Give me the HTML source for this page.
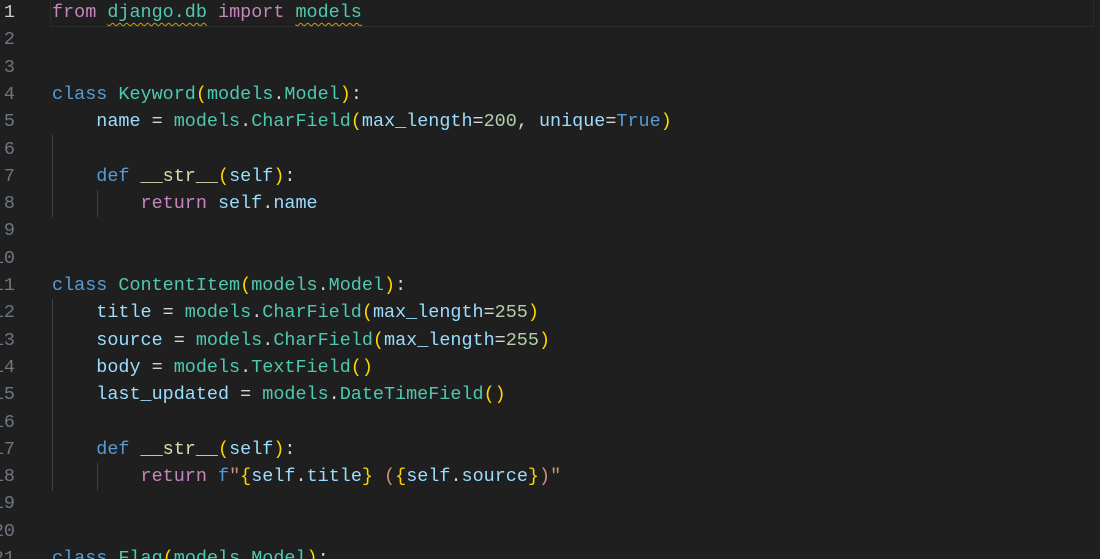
<!DOCTYPE html>
<html><head><style>
html,body{margin:0;padding:0;background:#1f1f1f;width:1100px;height:559px;overflow:hidden}
.ed{position:relative;font-family:"Liberation Mono",monospace;font-size:18.45px;}
.ln{position:absolute;left:-26px;width:41px;text-align:right;color:#6e7681;height:27.3px;line-height:27.3px}
.cl{position:absolute;left:52px;white-space:pre;color:#d4d4d4;height:27.3px;line-height:27.3px}
.k{color:#c586c0}.b{color:#569cd6}.t{color:#4ec9b0}.v{color:#9cdcfe}.y{color:#ffd700}.n{color:#b5cea8}.s{color:#ce9178}.f{color:#dcdcaa}
.sq{text-decoration:underline wavy #c9a400;text-underline-offset:5px;text-decoration-thickness:1px}
.g{position:absolute;width:1px;background:#404040}
</style></head><body><div class="ed">
<div style="position:absolute;left:50px;top:-1px;width:1042px;height:26px;border:1px solid #2c2c2c"></div>
<div class="g" style="left:52px;top:135px;height:82px"></div>
<div class="g" style="left:97px;top:190px;height:27px"></div>
<div class="g" style="left:52px;top:299px;height:192px"></div>
<div class="g" style="left:97px;top:463px;height:28px"></div>
<div class="ln" style="top:-1px;color:#ccc">1</div>
<div class="ln" style="top:26.3px">2</div>
<div class="ln" style="top:53.6px">3</div>
<div class="ln" style="top:80.9px">4</div>
<div class="ln" style="top:108.2px">5</div>
<div class="ln" style="top:135.5px">6</div>
<div class="ln" style="top:162.8px">7</div>
<div class="ln" style="top:190.1px">8</div>
<div class="ln" style="top:217.4px">9</div>
<div class="ln" style="top:244.7px">10</div>
<div class="ln" style="top:272px">11</div>
<div class="ln" style="top:299.3px">12</div>
<div class="ln" style="top:326.6px">13</div>
<div class="ln" style="top:353.9px">14</div>
<div class="ln" style="top:381.2px">15</div>
<div class="ln" style="top:408.5px">16</div>
<div class="ln" style="top:435.8px">17</div>
<div class="ln" style="top:463.1px">18</div>
<div class="ln" style="top:490.4px">19</div>
<div class="ln" style="top:517.7px">20</div>
<div class="ln" style="top:545px">21</div>
<div class="cl" style="top:-1px"><span class="k">from</span> <span class="t sq">django.db</span> <span class="k">import</span> <span class="t sq">models</span></div>
<div class="cl" style="top:80.9px"><span class="b">class</span> <span class="t">Keyword</span><span class="y">(</span><span class="t">models</span>.<span class="t">Model</span><span class="y">)</span>:</div>
<div class="cl" style="top:108.2px">    <span class="v">name</span> = <span class="t">models</span>.<span class="t">CharField</span><span class="y">(</span><span class="v">max_length</span>=<span class="n">200</span>, <span class="v">unique</span>=<span class="b">True</span><span class="y">)</span></div>
<div class="cl" style="top:162.8px">    <span class="b">def</span> <span class="f">__str__</span><span class="y">(</span><span class="v">self</span><span class="y">)</span>:</div>
<div class="cl" style="top:190.1px">        <span class="k">return</span> <span class="v">self</span>.<span class="v">name</span></div>
<div class="cl" style="top:272px"><span class="b">class</span> <span class="t">ContentItem</span><span class="y">(</span><span class="t">models</span>.<span class="t">Model</span><span class="y">)</span>:</div>
<div class="cl" style="top:299.3px">    <span class="v">title</span> = <span class="t">models</span>.<span class="t">CharField</span><span class="y">(</span><span class="v">max_length</span>=<span class="n">255</span><span class="y">)</span></div>
<div class="cl" style="top:326.6px">    <span class="v">source</span> = <span class="t">models</span>.<span class="t">CharField</span><span class="y">(</span><span class="v">max_length</span>=<span class="n">255</span><span class="y">)</span></div>
<div class="cl" style="top:353.9px">    <span class="v">body</span> = <span class="t">models</span>.<span class="t">TextField</span><span class="y">()</span></div>
<div class="cl" style="top:381.2px">    <span class="v">last_updated</span> = <span class="t">models</span>.<span class="t">DateTimeField</span><span class="y">()</span></div>
<div class="cl" style="top:435.8px">    <span class="b">def</span> <span class="f">__str__</span><span class="y">(</span><span class="v">self</span><span class="y">)</span>:</div>
<div class="cl" style="top:463.1px">        <span class="k">return</span> <span class="b">f</span><span class="s">"</span><span class="y">{</span><span class="v">self</span>.<span class="v">title</span><span class="y">}</span><span class="s"> (</span><span class="y">{</span><span class="v">self</span>.<span class="v">source</span><span class="y">}</span><span class="s">)"</span></div>
<div class="cl" style="top:545px"><span class="b">class</span> <span class="t">Flag</span><span class="y">(</span><span class="t">models</span>.<span class="t">Model</span><span class="y">)</span>:</div>
</div></body></html>
